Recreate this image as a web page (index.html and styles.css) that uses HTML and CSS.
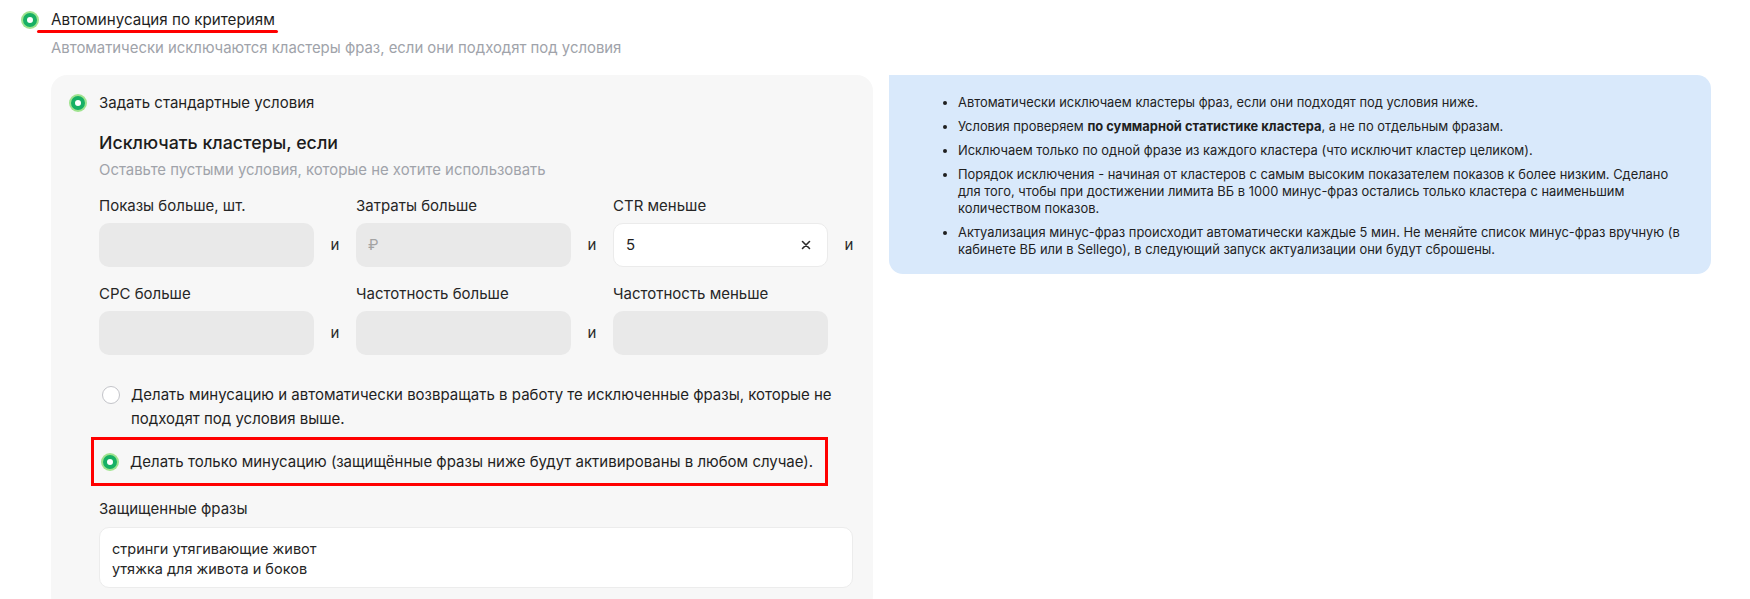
FILE: index.html
```html
<!DOCTYPE html>
<html lang="ru">
<head>
<meta charset="utf-8">
<title>Автоминусация</title>
<link rel="stylesheet" href="styles.css">
</head>
<body>
<div class="page">
  <div class="top-option">
    <span class="radio checked"></span>
    <span class="title">Автоминусация по критериям</span>
  </div>
  <div class="subtitle">Автоматически исключаются кластеры фраз, если они подходят под условия</div>

  <div class="columns">
    <div class="card">
      <div class="option-row">
        <span class="radio checked"></span>
        <span class="option-text">Задать стандартные условия</span>
      </div>

      <div class="inner">
        <h2 class="heading">Исключать кластеры, если</h2>
        <div class="hint">Оставьте пустыми условия, которые не хотите использовать</div>

        <div class="fields">
          <div class="field">
            <div class="label">Показы больше, шт.</div>
            <div class="field-row"><div class="input disabled"></div><span class="and">и</span></div>
          </div>
          <div class="field">
            <div class="label">Затраты больше</div>
            <div class="field-row"><div class="input disabled"><span class="placeholder">₽</span></div><span class="and">и</span></div>
          </div>
          <div class="field">
            <div class="label">CTR меньше</div>
            <div class="field-row">
              <div class="input active"><span class="value">5</span>
                <svg class="clear" width="10" height="10" viewBox="0 0 10 10"><path d="M1.5 1.5 L8.5 8.5 M8.5 1.5 L1.5 8.5" stroke="#2b2b2b" stroke-width="1.6" stroke-linecap="round"/></svg>
              </div><span class="and">и</span></div>
          </div>
          <div class="field">
            <div class="label">CPC больше</div>
            <div class="field-row"><div class="input disabled"></div><span class="and">и</span></div>
          </div>
          <div class="field">
            <div class="label">Частотность больше</div>
            <div class="field-row"><div class="input disabled"></div><span class="and">и</span></div>
          </div>
          <div class="field">
            <div class="label">Частотность меньше</div>
            <div class="field-row"><div class="input disabled"></div></div>
          </div>
        </div>

        <div class="choice">
          <span class="radio empty"></span>
          <span class="choice-text">Делать минусацию и автоматически возвращать в работу те исключенные фразы, которые не подходят под условия выше.</span>
        </div>

        <div class="highlight">
          <div class="choice single">
            <span class="radio checked"></span>
            <span class="choice-text">Делать только минусацию (защищённые фразы ниже будут активированы в любом случае).</span>
          </div>
        </div>

        <div class="label protected-label">Защищенные фразы</div>
        <div class="textarea">стринги утягивающие живот<br>утяжка для живота и боков</div>
      </div>
    </div>

    <div class="info">
      <ul class="info-list">
        <li>Автоматически исключаем кластеры фраз, если они подходят под условия ниже.</li>
        <li>Условия проверяем <b>по суммарной статистике кластера</b>, а не по отдельным фразам.</li>
        <li>Исключаем только по одной фразе из каждого кластера (что исключит кластер целиком).</li>
        <li>Порядок исключения - начиная от кластеров с самым высоким показателем показов к более низким. Сделано<br>для того, чтобы при достижении лимита ВБ в 1000 минус-фраз остались только кластера с наименьшим<br>количеством показов.</li>
        <li>Актуализация минус-фраз происходит автоматически каждые 5 мин. Не меняйте список минус-фраз вручную (в<br>кабинете ВБ или в Sellego), в следующий запуск актуализации они будут сброшены.</li>
      </ul>
    </div>
  </div>
</div>
</body>
</html>
```
FILE: styles.css
```css
* { box-sizing: border-box; }

html, body {
  margin: 0;
  padding: 0;
  background: #ffffff;
}

body {
  font-family: Inter, "Noto Sans", "Liberation Sans", sans-serif;
  color: #1f1f1f;
  font-size: 15px;
  line-height: 20px;
}

.page {
  padding: 10px 0 0 23px;
}

.top-option {
  display: flex;
  align-items: center;
  gap: 14px;
  height: 20px;
}

.title {
  position: relative;
  font-size: 15.2px;
  color: #1f1f1f;
}

.title::after {
  content: "";
  position: absolute;
  left: -14px;
  right: -3px;
  top: 20px;
  height: 3px;
  background: #ff0000;
  border-radius: 2px;
}

.radio {
  flex: none;
  display: inline-block;
  border-radius: 50%;
}

.radio.checked {
  width: 14px;
  height: 14px;
  background: #ffffff;
  border: 4.5px solid #17b064;
  box-shadow: 0 0 0 2px #9fe38f;
}

.radio.empty {
  width: 18px;
  height: 18px;
  background: #ffffff;
  border: 1.5px solid #c3c4c9;
}

.subtitle {
  margin: 8px 0 0 28px;
  font-size: 14.9px;
  color: #a0a3aa;
}

.columns {
  display: flex;
  align-items: flex-start;
  gap: 16px;
  margin: 17px 0 0 28px;
}

.card {
  flex: none;
  width: 822px;
  background: #f7f7f7;
  border-radius: 16px;
  padding: 18px 20px 24px 20px;
}

.option-row {
  display: flex;
  align-items: center;
  gap: 14px;
  height: 20px;
}

.inner {
  padding-left: 28px;
}

.heading {
  margin: 18px 0 0 0;
  font-size: 17.8px;
  line-height: 24px;
  font-weight: 500;
  color: #1c1c1c;
}

.hint {
  margin-top: 5px;
  font-size: 14.9px;
  color: #a0a3aa;
}

.fields {
  display: grid;
  grid-template-columns: repeat(3, 257px);
  row-gap: 17px;
  margin-top: 16px;
}

.field {
  display: flex;
  flex-direction: column;
  gap: 7px;
}

.label {
  font-size: 15px;
  line-height: 20px;
  color: #262626;
}

.field-row {
  display: flex;
  align-items: center;
}

.input {
  width: 215px;
  height: 44px;
  border-radius: 10px;
  display: flex;
  align-items: center;
  padding: 0 12px;
}

.input.disabled {
  background: #e9e9e9;
}

.input.active {
  background: #ffffff;
  border: 1px solid #ebebeb;
  justify-content: space-between;
  padding: 0 16px 0 12px;
}

.placeholder {
  color: #a3a3a3;
  font-size: 15px;
}

.value {
  font-size: 15px;
  color: #1f1f1f;
}

.clear {
  display: block;
}

.and {
  width: 42px;
  text-align: center;
  font-size: 15px;
  color: #2b2b2b;
}

.choice {
  display: flex;
  align-items: flex-start;
  gap: 11px;
  margin-top: 28px;
  padding-left: 3px;
  width: 760px;
}

.choice .radio {
  margin-top: 3px;
}

.choice-text {
  font-size: 15px;
  line-height: 24px;
  color: #1f1f1f;
}

.highlight {
  display: inline-block;
  margin: 6px 0 0 -8px;
  border: 3px solid #ff0000;
  padding: 10px 12px 9px 7px;
}

.choice.single {
  margin-top: 0;
  padding-left: 0;
  width: auto;
}

.choice.single .radio.checked {
  margin: 5px 2px 0 2px;
}

.protected-label {
  margin-top: 13px;
}

.textarea {
  margin-top: 8px;
  width: 754px;
  height: 61px;
  background: #ffffff;
  border: 1px solid #ececec;
  border-radius: 10px;
  padding: 11px 12px;
  font-size: 14.5px;
  line-height: 20px;
  color: #262626;
}

.info {
  flex: none;
  width: 822px;
  background: #d9e9fb;
  border-radius: 0 14px 14px 14px;
  padding: 19px 10px 16px 55px;
}

.info-list {
  margin: 0;
  padding-left: 14px;
  font-size: 12.9px;
  line-height: 17px;
  color: #1f1f1f;
}

.info-list li {
  margin-bottom: 7px;
}

.info-list li:last-child {
  margin-bottom: 0;
}

.info-list b {
  font-weight: 700;
}
```
